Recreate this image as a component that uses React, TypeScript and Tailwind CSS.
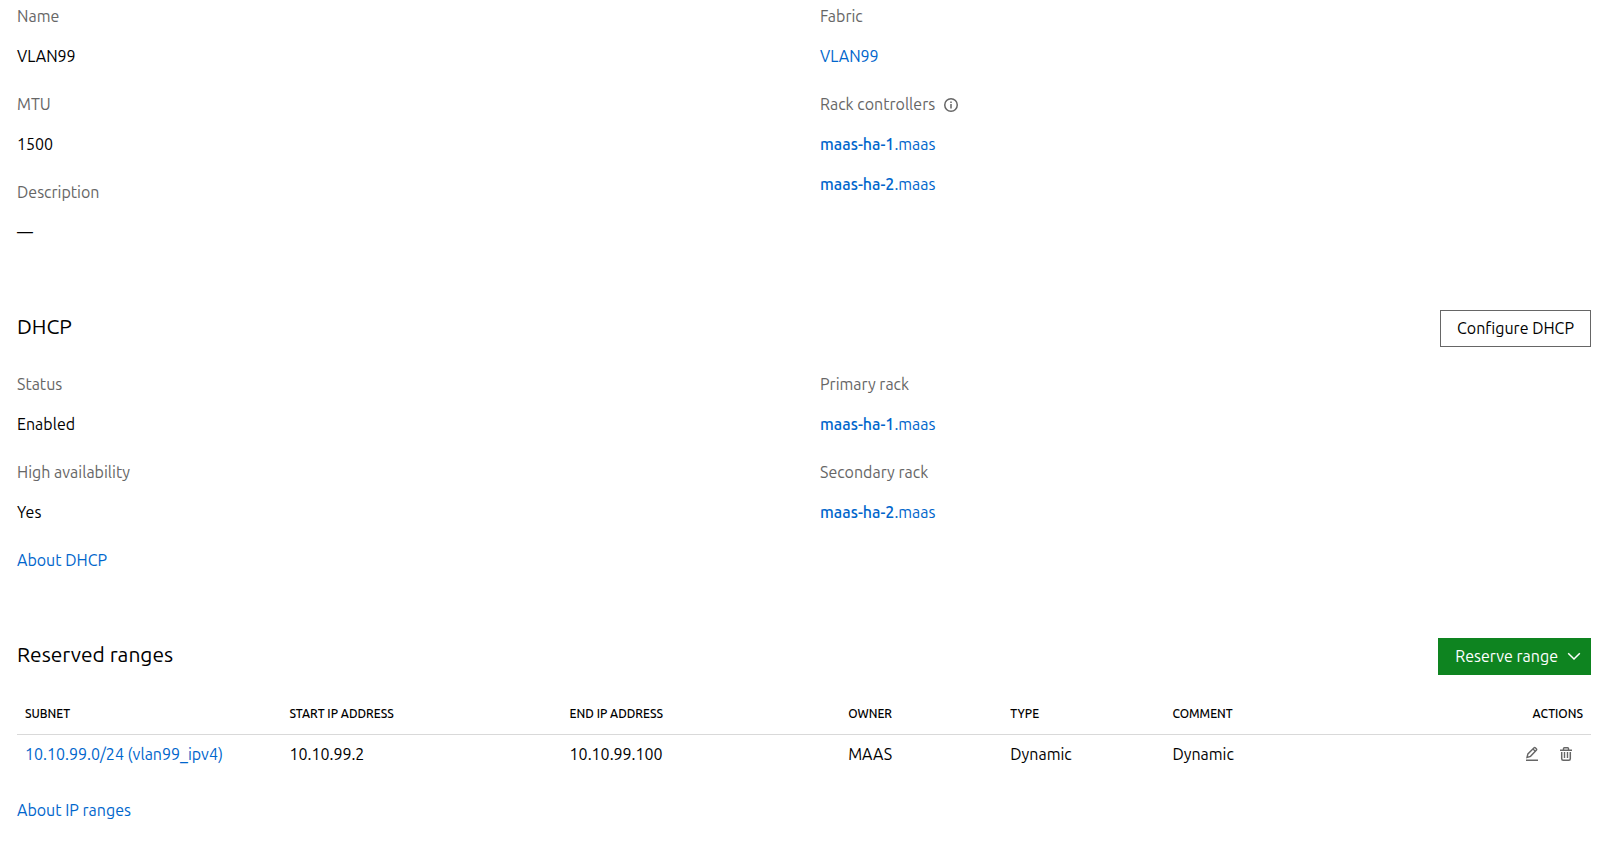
import type { ReactNode } from "react";

function Field({ label, children }: { label: ReactNode; children: ReactNode }) {
  return (
    <div className="flex flex-col gap-4">
      <dt className="flex items-center gap-2 text-[#666]">{label}</dt>
      {children}
    </div>
  );
}

function Link({ children }: { children: ReactNode }) {
  return (
    <a href="#" className="text-[#0066cc] hover:underline">
      {children}
    </a>
  );
}

function Controller({ name }: { name: string }) {
  return (
    <Link>
      <strong className="font-[550]">{name}</strong>.maas
    </Link>
  );
}

function InfoIcon() {
  return (
    <svg viewBox="0 0 16 16" className="size-4" fill="none" role="img" aria-label="Information">
      <circle cx="8" cy="9" r="6.25" stroke="#666" strokeWidth="1.5" />
      <path d="M7.25 8h1.5v4.5h-1.5zM7.25 5.5h1.5V7h-1.5z" fill="#666" />
    </svg>
  );
}

function PencilIcon() {
  return (
    <svg viewBox="0 0 16 16" className="size-4" fill="none" stroke="#666">
      <path d="M2 14.25h12" strokeWidth="1.5" />
      <path d="M3 11.5l.9-3.6 6.2-6.2q.6-.5 1.2 0l1.2 1.2q.5.6 0 1.2L6.5 10.3z" strokeWidth="1.4" />
      <path d="M9 3l2.5 2.5" strokeWidth="1.2" />
    </svg>
  );
}

function TrashIcon() {
  return (
    <svg viewBox="0 0 16 16" className="size-4" fill="none" stroke="#666">
      <path d="M2 4.25h12" strokeWidth="1.5" />
      <path d="M5.5 4V2.5q0-.8.8-.8h3.4q.8 0 .8.8V4" strokeWidth="1.4" />
      <path d="M3.7 6v6.7q0 1.5 1.5 1.5h5.6q1.5 0 1.5-1.5V6" strokeWidth="1.5" />
      <path d="M6.5 6v6M9.5 6v6" strokeWidth="1.4" />
    </svg>
  );
}

const headings = ["Subnet", "Start IP address", "End IP address", "Owner", "Type", "Comment"];

export default function App() {
  return (
    <main className="flex flex-col bg-white pt-1 pr-2 pl-[17px] font-['Ubuntu','Noto_Sans',sans-serif] text-base text-black">
      <section className="grid grid-cols-2 gap-x-8">
        <dl className="flex flex-col gap-6">
          <Field label="Name"><dd>VLAN99</dd></Field>
          <Field label="MTU"><dd>1500</dd></Field>
          <Field label="Description"><dd>—</dd></Field>
        </dl>
        <dl className="flex flex-col gap-6">
          <Field label="Fabric"><dd><Link>VLAN99</Link></dd></Field>
          <Field label={<>Rack controllers <InfoIcon /></>}>
            <dd><Controller name="maas-ha-1" /></dd>
            <dd><Controller name="maas-ha-2" /></dd>
          </Field>
        </dl>
      </section>

      <section className="pt-[66px]">
        <header className="flex items-start justify-between">
          <h2 className="text-[21px] leading-8">DHCP</h2>
          <button type="button" className="h-[37px] border border-[#666] px-4 pb-px">Configure DHCP</button>
        </header>
        <div className="grid grid-cols-2 gap-x-8 pt-[25px]">
          <dl className="flex flex-col gap-6">
            <Field label="Status"><dd>Enabled</dd></Field>
            <Field label="High availability"><dd>Yes</dd></Field>
          </dl>
          <dl className="flex flex-col gap-6">
            <Field label="Primary rack"><dd><Controller name="maas-ha-1" /></dd></Field>
            <Field label="Secondary rack"><dd><Controller name="maas-ha-2" /></dd></Field>
          </dl>
        </div>
        <p className="pt-6"><Link>About DHCP</Link></p>
      </section>

      <section className="pt-[66px]">
        <header className="flex items-start justify-between">
          <h2 className="text-[21px] leading-8">Reserved ranges</h2>
          <button type="button" className="flex h-[37px] items-center gap-2 bg-[#0e8420] pr-[9px] pb-px pl-[17px] text-white">
            Reserve range
            <svg viewBox="0 0 16 16" className="size-4" fill="none" stroke="#fff" strokeWidth="1.5">
              <path d="M2.2 5.2L8 11l5.800-5.800" />
            </svg>
          </button>
        </header>
        <table className="mt-4 w-full table-fixed text-left">
          <colgroup>
            <col className="w-[16.8%]" />
            <col className="w-[17.8%]" />
            <col className="w-[17.7%]" />
            <col className="w-[10.3%]" />
            <col className="w-[10.3%]" />
            <col className="w-[17.1%]" />
            <col className="w-[10%]" />
          </colgroup>
          <thead>
            <tr className="border-b border-[#d9d9d9] text-[12px] uppercase">
              {headings.map((h) => (
                <th key={h} scope="col" className="h-[43px] px-2 pt-1 font-[550]">{h}</th>
              ))}
              <th scope="col" className="px-2 pt-1 text-right font-[550]">Actions</th>
            </tr>
          </thead>
          <tbody>
            <tr>
              <td className="h-10 px-2"><Link>10.10.99.0/24 (vlan99_ipv4)</Link></td>
              <td className="px-2">10.10.99.2</td>
              <td className="px-2">10.10.99.100</td>
              <td className="px-2">MAAS</td>
              <td className="px-2">Dynamic</td>
              <td className="px-2">Dynamic</td>
              <td>
                <div className="flex justify-end gap-[18px] pr-[17px]">
                  <button type="button" aria-label="Edit"><PencilIcon /></button>
                  <button type="button" aria-label="Delete"><TrashIcon /></button>
                </div>
              </td>
            </tr>
          </tbody>
        </table>
        <p className="pt-6"><Link>About IP ranges</Link></p>
      </section>
    </main>
  );
}
